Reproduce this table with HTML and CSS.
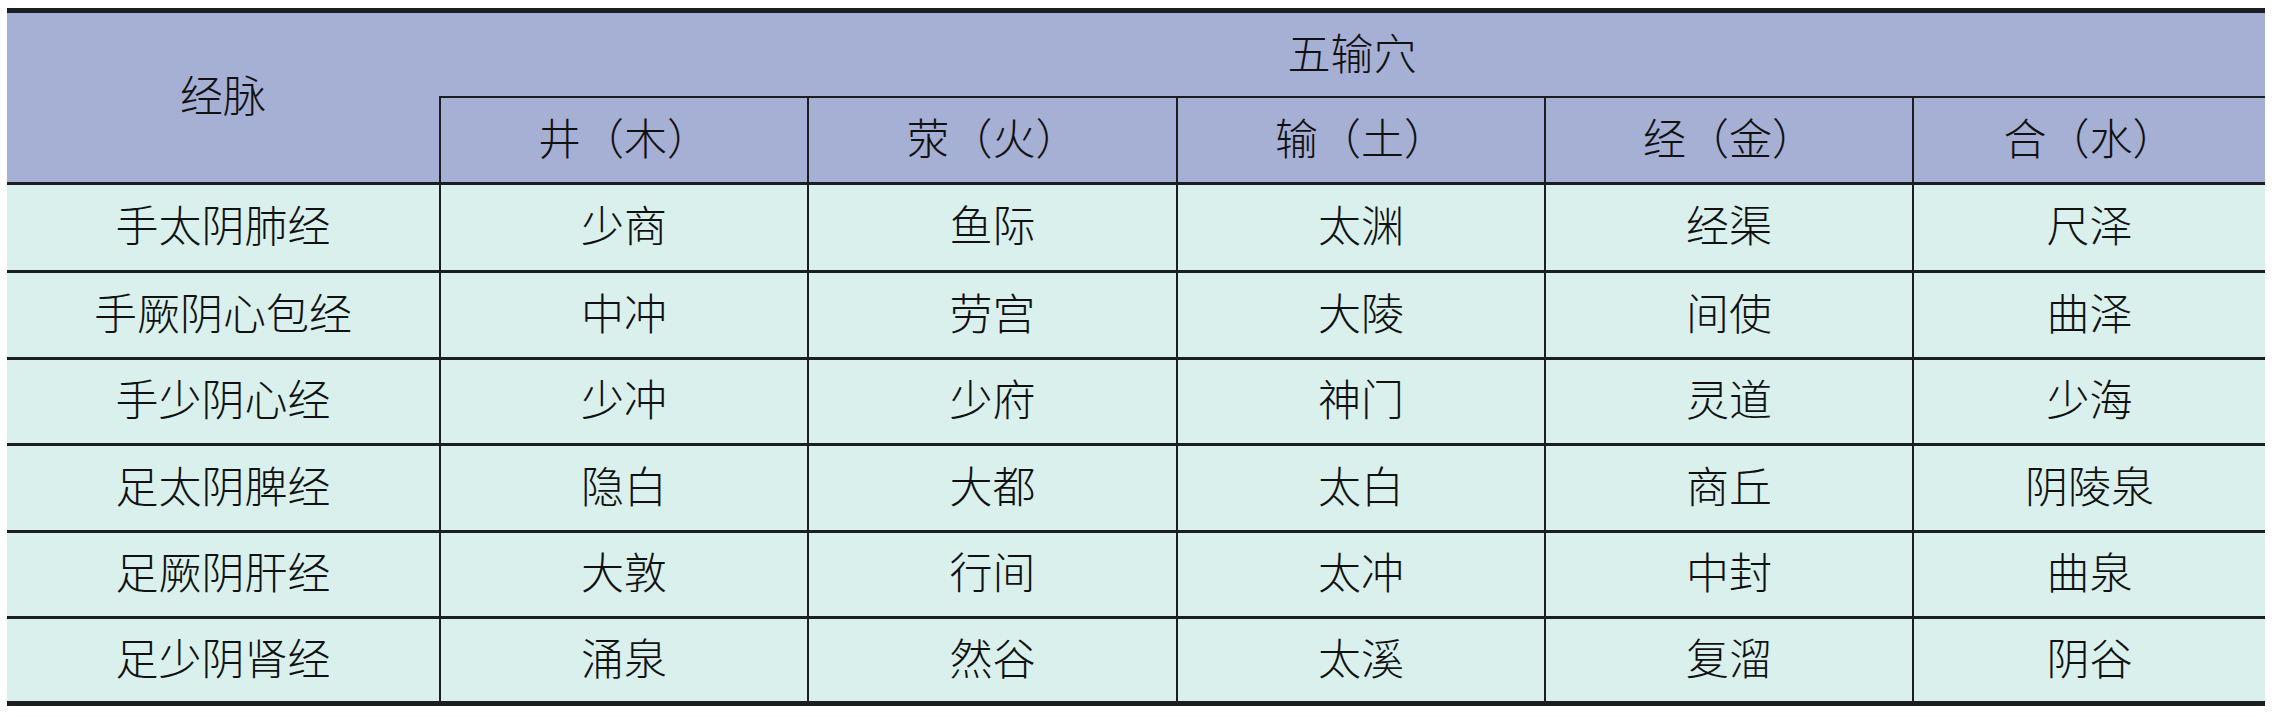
FILE: index.html
```html
<!DOCTYPE html>
<html lang="zh-CN">
<head>
<meta charset="utf-8">
<title>五输穴</title>
<link rel="stylesheet" href="styles.css">
</head>
<body>
<div class="table">
  <div class="cell head meridian-head">经脉</div>
  <div class="cell head col-head group-head">五输穴</div>
  <div class="cell head sub col">井（木）</div>
  <div class="cell head sub col">荥（火）</div>
  <div class="cell head sub col">输（土）</div>
  <div class="cell head sub col">经（金）</div>
  <div class="cell head sub col">合（水）</div>

  <div class="cell body first">手太阴肺经</div>
  <div class="cell body col">少商</div>
  <div class="cell body col">鱼际</div>
  <div class="cell body col">太渊</div>
  <div class="cell body col">经渠</div>
  <div class="cell body col">尺泽</div>

  <div class="cell body first">手厥阴心包经</div>
  <div class="cell body col">中冲</div>
  <div class="cell body col">劳宫</div>
  <div class="cell body col">大陵</div>
  <div class="cell body col">间使</div>
  <div class="cell body col">曲泽</div>

  <div class="cell body first">手少阴心经</div>
  <div class="cell body col">少冲</div>
  <div class="cell body col">少府</div>
  <div class="cell body col">神门</div>
  <div class="cell body col">灵道</div>
  <div class="cell body col">少海</div>

  <div class="cell body first">足太阴脾经</div>
  <div class="cell body col">隐白</div>
  <div class="cell body col">大都</div>
  <div class="cell body col">太白</div>
  <div class="cell body col">商丘</div>
  <div class="cell body col">阴陵泉</div>

  <div class="cell body first">足厥阴肝经</div>
  <div class="cell body col">大敦</div>
  <div class="cell body col">行间</div>
  <div class="cell body col">太冲</div>
  <div class="cell body col">中封</div>
  <div class="cell body col">曲泉</div>

  <div class="cell body first last">足少阴肾经</div>
  <div class="cell body col last">涌泉</div>
  <div class="cell body col last">然谷</div>
  <div class="cell body col last">太溪</div>
  <div class="cell body col last">复溜</div>
  <div class="cell body col last">阴谷</div>
</div>
</body>
</html>
```

FILE: styles.css
```css
html, body {
  margin: 0;
  padding: 0;
  background: #ffffff;
}

body {
  font-family: "Liberation Serif", "Noto Sans CJK SC", serif;
  color: #111111;
}

.table {
  margin: 8px 0 0 7px;
  width: 2258px;
  display: grid;
  grid-template-columns: 432px 368px 369px 368px 368px 353px;
  grid-template-rows: 85px 87px 88px 87px 86px 87px 86px 82px;
  border-top: 5px solid #1c1f22;
  border-bottom: 5px solid #1c1f22;
}

.cell {
  box-sizing: border-box;
  display: flex;
  align-items: center;
  justify-content: center;
  font-size: 43px;
  font-weight: 300;
  line-height: 1;
  white-space: nowrap;
}

.head {
  background: #a6afd4;
}

.body {
  background: #d9f0ec;
  border-bottom: 3px solid #1c1f22;
}

.body.last {
  border-bottom: none;
}

.col {
  border-left: 2px solid #1c1f22;
}

.meridian-head {
  grid-row: 1 / span 2;
  grid-column: 1;
  border-bottom: 3px solid #1c1f22;
}

.group-head {
  grid-column: 2 / span 5;
  grid-row: 1;
  border-bottom: 2px solid #1c1f22;
  padding-top: 1px;
}

.sub {
  border-bottom: 3px solid #1c1f22;
  padding-top: 1px;
}
```
